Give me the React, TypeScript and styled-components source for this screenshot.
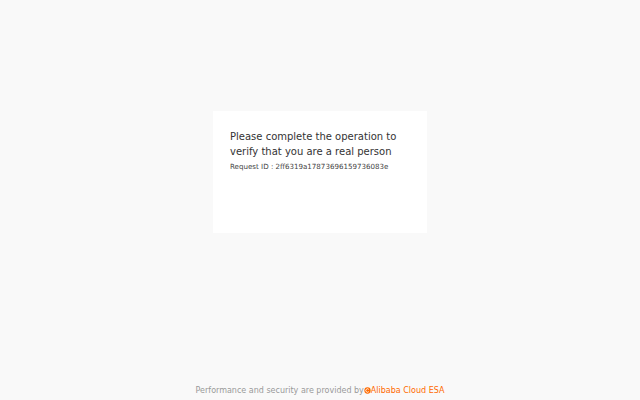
import React from 'react';
import styled, { createGlobalStyle } from 'styled-components';

const GlobalStyle = createGlobalStyle`
html, body {
  margin: 0;
  padding: 0;
  background: #f9f9f9;
  font-family: "DejaVu Sans", sans-serif;
}
`;

const Page = styled.div`
width: 100%;
height: 400px;
display: flex;
flex-direction: column;
align-items: center;
`;

const Main = styled.div`
flex: 1;
display: flex;
justify-content: center;
padding-top: 111px;
`;

const Card = styled.div`
width: 214px;
height: 122px;
box-sizing: border-box;
background: #ffffff;
padding: 18px 17px;
`;

const Title = styled.div`
font-size: 10px;
line-height: 15px;
color: #333333;
`;

const RequestId = styled.div`
margin-top: 3px;
font-size: 7.1px;
line-height: 10px;
color: #444444;
`;

const Footer = styled.div`
height: 20px;
display: flex;
align-items: center;
justify-content: center;
font-size: 8px;
color: #999999;
`;

const Brand = styled.span`
display: inline-flex;
align-items: center;
color: #ff6a00;
`;

const App: React.FC = () => {
  return (
    <Page>
      <GlobalStyle />
      <Main>
        <Card>
          <Title>Please complete the operation to verify that you are a real person</Title>
          <RequestId>Request ID : 2ff6319a17873696159736083e</RequestId>
        </Card>
      </Main>
      <Footer>
        Performance and security are provided by
        <Brand>
          <svg width="7" height="7" viewBox="0 0 10 10">
            <circle cx="5" cy="5" r="4.5" fill="#ff6a00" />
            <path d="M6.8 3.4 A2.4 2.4 0 1 0 6.8 6.6" stroke="#fff" strokeWidth="1.3" fill="none" />
          </svg>
          Alibaba Cloud ESA
        </Brand>
      </Footer>
    </Page>
  );
};

export default App;
